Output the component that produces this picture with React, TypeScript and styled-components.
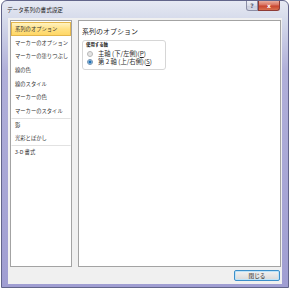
import styled, { createGlobalStyle } from "styled-components";

const GlobalStyle = createGlobalStyle`
  body {
    margin: 0;
    background: #ffffff;
    font-family: "Noto Sans CJK JP", "Noto Sans", sans-serif;
  }
`;

const Window = styled.div`
  box-sizing: border-box;
  width: 288px;
  height: 288px;
  margin: 0 1px;
  border: 1px solid #62658a;
  border-radius: 6px 6px 0 0;
  background: linear-gradient(180deg, #e6e9f3 0px, #d6dbeb 18px, #b0afd9 70px, #a09ed2 100%);
  display: flex;
  flex-direction: column;
  padding: 0 6px 3px 6px;
`;

const TitleBar = styled.div`
  height: 17px;
  margin: 0 -6px;
  padding-left: 5px;
  display: flex;
  align-items: flex-start;
  justify-content: space-between;
`;

const Title = styled.span`
  font-size: 5.6px;
  line-height: 8px;
  padding-top: 5px;
  color: #1e1e1e;
  white-space: nowrap;
`;

const Caption = styled.div`
  display: flex;
  margin-right: 8px;
`;

const CaptionButton = styled.div<{ $close?: boolean }>`
  width: ${(p) => (p.$close ? "22px" : "12px")};
  height: 10px;
  box-sizing: border-box;
  border: 1px solid ${(p) => (p.$close ? "#8d3a35" : "#8b8ea6")};
  border-top: none;
  border-radius: ${(p) => (p.$close ? "0 0 3px 0" : "0 0 0 3px")};
  background: ${(p) =>
    p.$close
      ? "linear-gradient(180deg, #e9ad9e 0%, #d8705e 45%, #c8452f 55%, #d8704f 100%)"
      : "linear-gradient(180deg, #eef0f6 0%, #d9dce8 50%, #c9cddd 55%, #d6d9e6 100%)"};
  display: flex;
  align-items: center;
  justify-content: center;
  color: ${(p) => (p.$close ? "#ffffff" : "#5b5f78")};
  font-family: "DejaVu Sans", sans-serif;
  font-size: 6px;
  font-weight: bold;
  line-height: 1;
`;

const Client = styled.div`
  flex: 1;
  background: #f0f0f0;
  display: grid;
  grid-template-columns: 62px 1fr;
  grid-template-rows: 1fr auto;
  column-gap: 6px;
  row-gap: 3px;
  padding: 2px 1px 3px 2px;
`;

const NavList = styled.div`
  background: #ffffff;
  border: 1px solid #a3a3a3;
  padding: 1px 0;
  overflow: hidden;
`;

const NavItem = styled.div<{ $active?: boolean; $sep?: boolean }>`
  box-sizing: border-box;
  height: 13.7px;
  display: flex;
  align-items: center;
  padding-left: 3px;
  font-size: 5.3px;
  color: #333333;
  white-space: nowrap;
  overflow: hidden;
  border: 1px solid ${(p) => (p.$active ? "#e3b64c" : "transparent")};
  border-top-color: ${(p) => (p.$active ? "#e3b64c" : p.$sep ? "#e2e2e2" : "transparent")};
  background: ${(p) => (p.$active ? "linear-gradient(180deg, #fff3c2 0%, #ffe185 50%, #ffd766 100%)" : "transparent")};
`;

const Panel = styled.div`
  background: #ffffff;
  border: 1px solid #a3a3a3;
  padding: 6px 3px;
`;

const Heading = styled.div`
  font-size: 7px;
  line-height: 9px;
  color: #1f1f1f;
  white-space: nowrap;
`;

const GroupBox = styled.div`
  width: 84px;
  box-sizing: border-box;
  margin-top: 4px;
  border: 1px solid #d6d6d6;
  border-radius: 3px;
  padding: 0 3px 3px 3px;
`;

const GroupLabel = styled.div`
  font-size: 4.4px;
  line-height: 6px;
  color: #222222;
  font-weight: bold;
  margin-bottom: 3px;
`;

const RadioRow = styled.div`
  height: 8px;
  display: flex;
  align-items: center;
  gap: 5px;
  font-size: 6.3px;
  line-height: 8px;
  color: #2a2a2a;
  white-space: nowrap;
`;

const RadioDot = styled.span<{ $checked?: boolean }>`
  width: 6px;
  height: 6px;
  flex: none;
  margin-left: 1px;
  box-sizing: border-box;
  border-radius: 50%;
  border: 1px solid ${(p) => (p.$checked ? "#6f8fb0" : "#b4b4b4")};
  background: ${(p) =>
    p.$checked
      ? "radial-gradient(circle, #1f6fb4 0 1.4px, #7fb4dc 1.6px 2px, #eef4f9 2.2px)"
      : "radial-gradient(circle, #e4e4e4 0 1.6px, #f6f6f6 2px)"};
`;

const Footer = styled.div`
  grid-column: 1 / 3;
  display: flex;
  justify-content: flex-end;
`;

const Button = styled.div`
  width: 46px;
  height: 11px;
  box-sizing: border-box;
  margin-right: 1px;
  border: 1px solid #3d8fc9;
  border-radius: 2px;
  background: linear-gradient(180deg, #f2f2f2 0%, #e6e6e6 50%, #d9d9d9 100%);
  box-shadow: inset 0 0 0 1px #bfe3f8;
  display: flex;
  align-items: center;
  justify-content: center;
  font-size: 5.6px;
  color: #222222;
`;

const navItems = [
  { label: "系列のオプション", active: true },
  { label: "マーカーのオプション" },
  { label: "マーカーの塗りつぶし" },
  { label: "線の色" },
  { label: "線のスタイル" },
  { label: "マーカーの色" },
  { label: "マーカーのスタイル" },
  { label: "影", sep: true },
  { label: "光彩とぼかし" },
  { label: "3-D 書式", sep: true },
];

export default function App() {
  return (
    <>
      <GlobalStyle />
      <Window>
        <TitleBar>
          <Title>データ系列の書式設定</Title>
          <Caption>
            <CaptionButton>?</CaptionButton>
            <CaptionButton $close>x</CaptionButton>
          </Caption>
        </TitleBar>
        <Client>
          <NavList>
            {navItems.map((item) => (
              <NavItem key={item.label} $active={item.active} $sep={item.sep}>
                {item.label}
              </NavItem>
            ))}
          </NavList>
          <Panel>
            <Heading>系列のオプション</Heading>
            <GroupBox>
              <GroupLabel>使用する軸</GroupLabel>
              <RadioRow>
                <RadioDot />
                <span>
                  主軸 (下/左側)(<u>P</u>)
                </span>
              </RadioRow>
              <RadioRow>
                <RadioDot $checked />
                <span>
                  第 2 軸 (上/右側)(<u>S</u>)
                </span>
              </RadioRow>
            </GroupBox>
          </Panel>
          <Footer>
            <Button>閉じる</Button>
          </Footer>
        </Client>
      </Window>
    </>
  );
}
